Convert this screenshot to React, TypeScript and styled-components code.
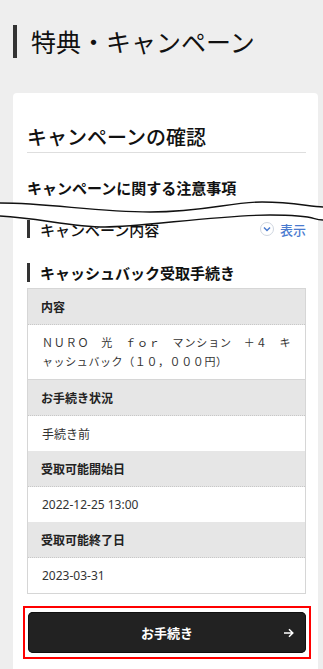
import styled, { createGlobalStyle } from 'styled-components';

const GlobalStyle = createGlobalStyle`
  html, body {
    margin: 0;
    padding: 0;
    background: #eeeeee;
  }
  body {
    font-family: "Noto Sans CJK JP", "Noto Sans", sans-serif;
    color: #222;
  }
`;

const StyledPage = styled.div`
  position: relative;
  min-height: 669px;
  padding: 25px 0 0 13px;
  box-sizing: border-box;
  overflow: hidden;
`;

const StyledPageTitle = styled.h1`
  margin: 0;
  border-left: 4px solid #333;
  padding-left: 14px;
  font-size: 25px;
  font-weight: 400;
  line-height: 33px;
  color: #111;
`;

const StyledCard = styled.div`
  width: 305px;
  margin-top: 35px;
  box-sizing: border-box;
  padding: 30px 12px 30px 14px;
  background: #fff;
  border-radius: 4px 4px 0 0;
`;

const StyledCardTitle = styled.h2`
  margin: 0;
  padding-bottom: 1px;
  border-bottom: 1px solid #dedede;
  font-size: 20px;
  font-weight: 500;
  line-height: 28px;
  color: #111;
`;

const StyledNoticeTitle = styled.h3`
  margin: 24px 0 0;
  font-size: 15px;
  font-weight: 700;
  line-height: 22px;
  color: #111;
`;

const StyledToggleRow = styled.div`
  display: flex;
  align-items: center;
  justify-content: space-between;
  margin-top: 21px;
  height: 18px;
  border-left: 3px solid #333;
  padding-left: 10px;
  font-size: 15px;
  font-weight: 500;
  color: #111;
`;

const StyledToggle = styled.span`
  display: flex;
  align-items: center;
  gap: 6px;
  font-size: 13px;
  color: #4a7bcf;
`;

const StyledChevron = styled.span`
  display: inline-flex;
  align-items: center;
  justify-content: center;
  width: 12px;
  height: 12px;
  border: 1px solid #cfd6e0;
  border-radius: 50%;
`;

const StyledSectionTitle = styled.h3`
  margin: 25px 0 0;
  height: 19px;
  border-left: 3px solid #333;
  padding-left: 10px;
  font-size: 15px;
  font-weight: 700;
  line-height: 19px;
  color: #111;
`;

const StyledTable = styled.div`
  margin-top: 6px;
  border: 1px solid #d6d6d6;
`;

const StyledHeadCell = styled.div`
  display: flex;
  align-items: center;
  height: 36px;
  box-sizing: border-box;
  padding: 0 13px;
  background: #e6e6e6;
  border-bottom: 1px dotted #c8c8c8;
  font-size: 12px;
  font-weight: 700;
  color: #222;
`;

const StyledValueCell = styled.div<{ $wide?: boolean }>`
  display: ${({ $wide }) => ($wide ? 'block' : 'flex')};
  align-items: center;
  min-height: 35px;
  box-sizing: border-box;
  padding: ${({ $wide }) => ($wide ? '8px 14px' : '0 14px')};
  background: #fff;
  border-bottom: 1px solid #d6d6d6;
  font-size: ${({ $wide }) => ($wide ? '11px' : '12px')};
  line-height: 19px;
  color: #333;
  letter-spacing: ${({ $wide }) => ($wide ? '0.6px' : '0')};
  text-align: ${({ $wide }) => ($wide ? 'justify' : 'left')};
  &:last-child {
    border-bottom: none;
  }
`;

const StyledDate = styled.span`
  font-family: "Noto Sans", "Open Sans", sans-serif;
  font-size: 12px;
`;

const StyledButtonFrame = styled.div`
  margin: 12px -5px 0 -4px;
  padding: 4px 3px;
  border: 2px solid #ff0000;
`;

const StyledButton = styled.button`
  display: grid;
  grid-template-columns: 1fr auto 1fr;
  align-items: center;
  width: 100%;
  height: 41px;
  padding: 0 12px;
  border: none;
  border-radius: 5px;
  background: #222;
  color: #fff;
  font-family: "Noto Sans CJK JP", sans-serif;
  font-size: 13px;
  font-weight: 700;
  cursor: pointer;
  box-shadow: 0 0 0 1px #111 inset;
`;

const StyledButtonLabel = styled.span`
  grid-column: 2;
`;

const StyledArrow = styled.span`
  grid-column: 3;
  justify-self: end;
  display: flex;
`;

const StyledWave = styled.svg`
  position: absolute;
  left: 0;
  top: 195px;
  width: 323px;
  height: 40px;
  z-index: 2;
`;

const topCurve = 'M0 8 C 50 8, 95 17, 150 17 S 230 7, 262 7 S 310 12, 323 12';
const bottomCurve = 'M0 21 C 40 23, 70 32, 105 32 S 220 20, 270 20 S 310 25, 323 25';
const band =
  topCurve +
  ' L323 25 C 310 25, 320 20, 270 20 C 220 20, 140 32, 105 32 C 70 32, 40 23, 0 21 Z';

const Wave = () => (
  <StyledWave viewBox="0 0 323 40">
    <path d={band} fill="#fff" />
    <path d={topCurve} fill="none" stroke="#111" strokeWidth="1.4" />
    <path d={bottomCurve} fill="none" stroke="#111" strokeWidth="1.4" />
  </StyledWave>
);

const rows = [
  { label: 'お手続き状況', value: '手続き前' },
  { label: '受取可能開始日', value: '2022-12-25 13:00', date: true },
  { label: '受取可能終了日', value: '2023-03-31', date: true },
];

const App = () => {
  return (
    <>
      <GlobalStyle />
      <StyledPage>
        <StyledPageTitle>特典・キャンペーン</StyledPageTitle>
        <StyledCard>
          <StyledCardTitle>キャンペーンの確認</StyledCardTitle>
          <StyledNoticeTitle>キャンペーンに関する注意事項</StyledNoticeTitle>
          <StyledToggleRow>
            キャンペーン内容
            <StyledToggle>
              <StyledChevron>
                <svg width="8" height="6" viewBox="0 0 8 6">
                  <path d="M1 1.5 L4 4.5 L7 1.5" fill="none" stroke="#4a7bcf" strokeWidth="1.5" />
                </svg>
              </StyledChevron>
              表示
            </StyledToggle>
          </StyledToggleRow>
          <StyledSectionTitle>キャッシュバック受取手続き</StyledSectionTitle>
          <StyledTable>
            <StyledHeadCell>内容</StyledHeadCell>
            <StyledValueCell $wide>
              ＮＵＲＯ　光　ｆｏｒ　マンション　＋４　キャッシュバック（１０，０００円）
            </StyledValueCell>
            {rows.map((r) => (
              <div key={r.label}>
                <StyledHeadCell>{r.label}</StyledHeadCell>
                <StyledValueCell>
                  {r.date ? <StyledDate>{r.value}</StyledDate> : r.value}
                </StyledValueCell>
              </div>
            ))}
          </StyledTable>
          <StyledButtonFrame>
            <StyledButton>
              <StyledButtonLabel>お手続き</StyledButtonLabel>
              <StyledArrow>
                <svg width="11" height="10" viewBox="0 0 11 10">
                  <path d="M1 5 H10 M6 1.3 L9.8 5 L6 8.7" fill="none" stroke="#fff" strokeWidth="1.5" />
                </svg>
              </StyledArrow>
            </StyledButton>
          </StyledButtonFrame>
        </StyledCard>
        <Wave />
      </StyledPage>
    </>
  );
};

export default App;
